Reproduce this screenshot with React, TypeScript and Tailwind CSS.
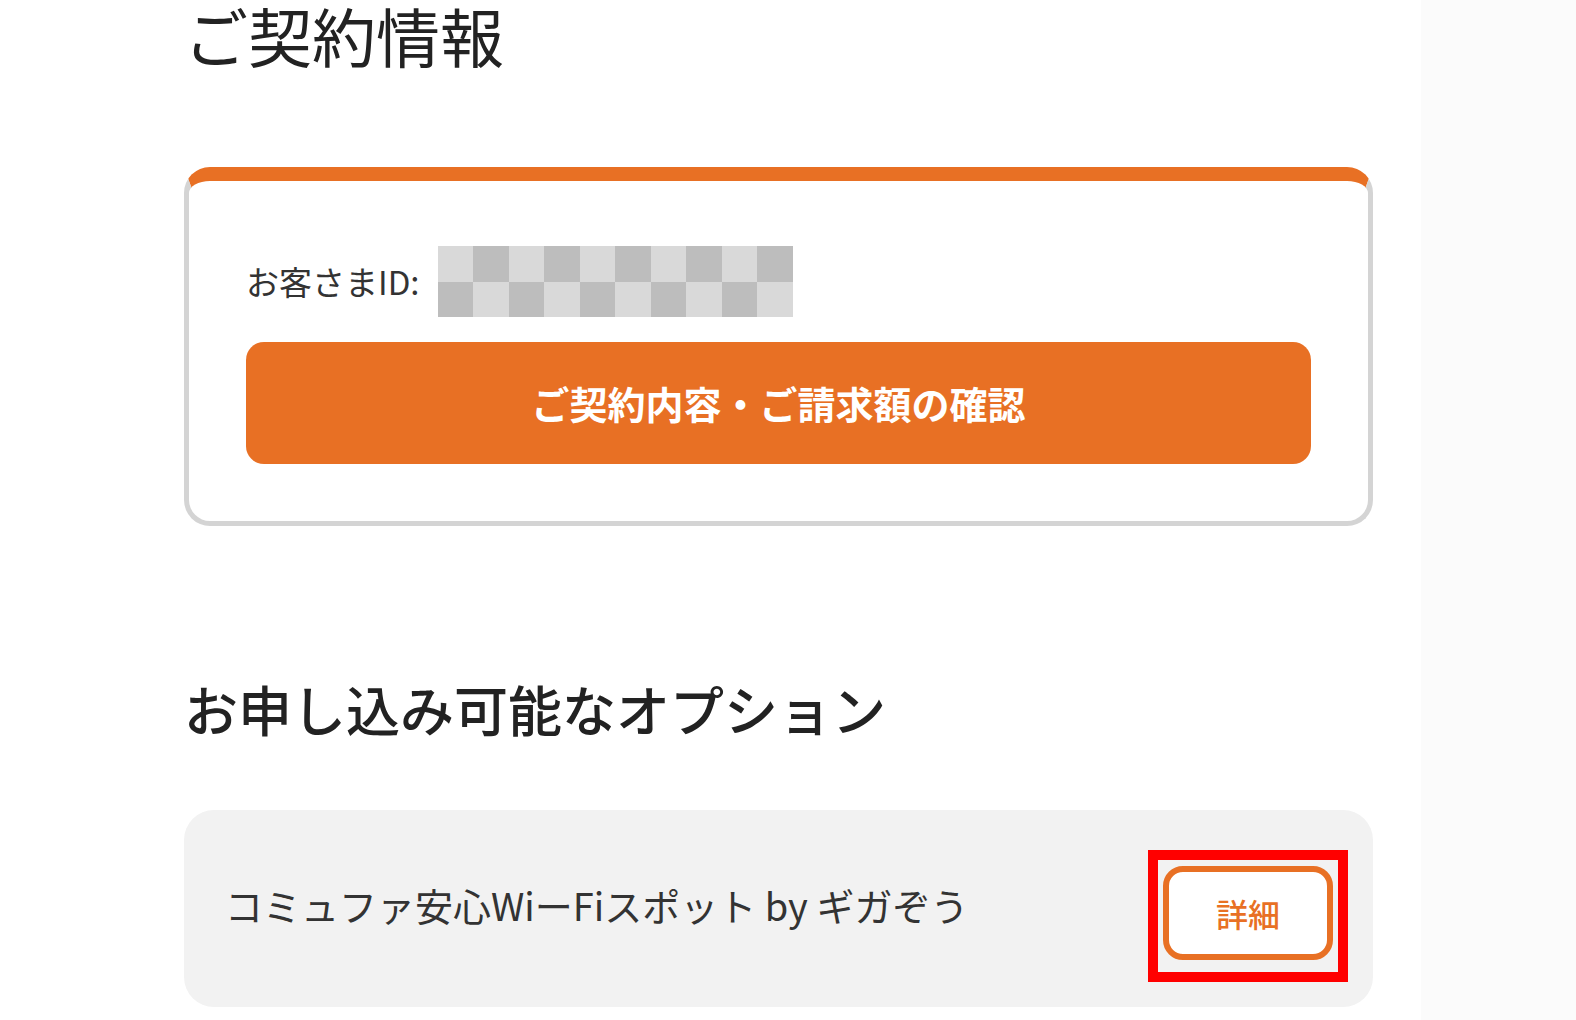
import React from "react";

const FONT = "font-['Noto_Sans_CJK_JP','Noto_Sans',sans-serif]";

function Checker() {
  const cells: React.ReactElement[] = [];
  for (let r = 0; r < 2; r++) {
    for (let c = 0; c < 10; c++) {
      const dark = (r + c) % 2 === 1;
      cells.push(
        <div
          key={`${r}-${c}`}
          className={dark ? "bg-[#bdbdbd]" : "bg-[#d9d9d9]"}
        />
      );
    }
  }
  return (
    <div className="grid h-[71px] w-[355px] shrink-0 grid-cols-10 grid-rows-2">
      {cells}
    </div>
  );
}

export default function App() {
  return (
    <div className={`flex min-h-[1020px] w-full bg-white ${FONT}`}>
      <main className="flex w-[1421px] shrink-0 flex-col pb-[17px] pl-[184px] pr-[48px]">
        <h1 className="mt-[2px] text-[64px] font-normal leading-none text-[#222]">
          ご契約情報
        </h1>

        <section className="mt-[101px] h-[359px] rounded-[26px] border-[5px] border-t-[14px] border-[#d4d4d4] border-t-[#e87024] bg-white px-[57px] pt-[65px]">
          <div className="flex items-center">
            <span className="mr-[18px] text-[33px] leading-none text-[#333]">
              お客さまID:
            </span>
            <Checker />
          </div>
          <button className="mt-[25px] flex h-[122px] w-full items-center justify-center rounded-[18px] bg-[#e87024] text-[38px] font-bold leading-none text-white">
            ご契約内容・ご請求額の確認
          </button>
        </section>

        <h2 className="mt-[156px] text-[54px] font-medium leading-none text-[#222]">
          お申し込み可能なオプション
        </h2>

        <section className="mt-[74px] flex h-[197px] items-center justify-between rounded-[30px] bg-[#f2f2f2] pl-[41px] pr-[25px]">
          <span className="pb-[8px] text-[38px] leading-none text-[#333]">
            コミュファ安心WiーFiスポット by ギガぞう
          </span>
          <div className="mt-[14px] border-[10px] border-[#ff0000] px-[5px] pb-[12px] pt-[6px]">
            <button className="flex h-[94px] w-[170px] items-center justify-center rounded-[20px] border-[6px] border-[#e87024] bg-white text-[32px] font-medium leading-none text-[#e87024]">
              詳細
            </button>
          </div>
        </section>
      </main>
      <aside className="flex-1 bg-[#fbfbfb]" />
    </div>
  );
}
